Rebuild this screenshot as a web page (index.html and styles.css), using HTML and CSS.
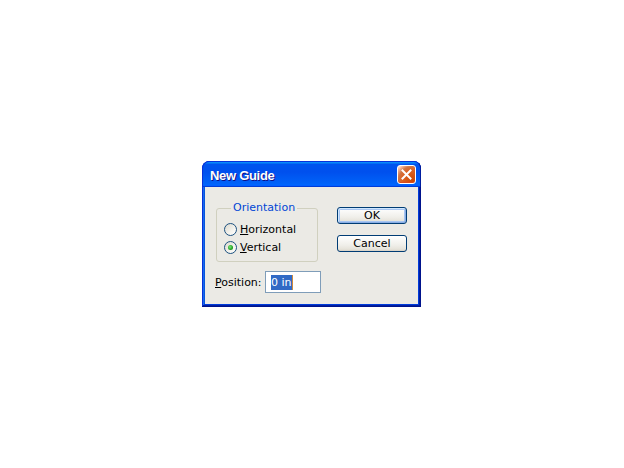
FILE: index.html
```html
<!DOCTYPE html>
<html lang="en">
<head>
<meta charset="utf-8">
<title>New Guide</title>
<link rel="stylesheet" href="styles.css">
</head>
<body>
<div class="window">
  <div class="titlebar">
    <span class="title">New Guide</span>
    <button class="close" aria-label="Close">
      <svg width="17" height="17" viewBox="0 0 17 17"><path d="M4.5 4.5 L12.5 12.5 M12.5 4.5 L4.5 12.5" stroke="#fff" stroke-width="2" stroke-linecap="square" fill="none"/></svg>
    </button>
  </div>
  <div class="body">
    <div class="top">
      <fieldset class="group">
        <legend>Orientation</legend>
        <label class="radio"><span class="circle"></span><span><u>H</u>orizontal</span></label>
        <label class="radio"><span class="circle checked"></span><span><u>V</u>ertical</span></label>
      </fieldset>
      <div class="buttons">
        <button class="btn default">OK</button>
        <button class="btn">Cancel</button>
      </div>
    </div>
    <div class="pos">
      <span class="label"><u>P</u>osition:</span>
      <div class="field"><span class="sel">0 in</span><span class="caret"></span></div>
    </div>
  </div>
</div>
</body>
</html>
```

FILE: styles.css
```css
html, body {
  margin: 0;
  background: #ffffff;
}
body {
  padding: 161px 0 0 202px;
  font-family: "DejaVu Sans", "Liberation Sans", sans-serif;
  font-size: 11px;
  color: #000;
}
.window {
  width: 219px;
  box-sizing: border-box;
  background: #ebeae5;
  border-radius: 8px 8px 0 0;
  padding: 0 3px 3px 3px;
  box-shadow:
    inset -1px -1px #00138c,
    inset 1px 1px #0831d9,
    inset -2px -2px #001ea0,
    inset 2px 2px #166aee,
    inset -3px -3px #003bda,
    inset 3px 3px #0855dd;
}
.titlebar {
  margin: 0 -3px;
  height: 26px;
  box-sizing: border-box;
  border-radius: 7px 7px 0 0;
  border-top: 1px solid #0831d9;
  border-left: 1px solid #0831d9;
  border-right: 1px solid #001ea0;
  background: linear-gradient(180deg, #0997ff, #0053ee 10%, #0050ee 40%, #0062f8 85%, #0066ff 92%, #005bff 95%, #003dd7 97%, #003dd7);
  display: flex;
  align-items: center;
  justify-content: space-between;
  padding: 0 4px 0 7px;
}
.title {
  font-family: "Liberation Sans", Arial, sans-serif;
  font-weight: bold;
  font-size: 13px;
  letter-spacing: -0.3px;
  color: #fff;
  text-shadow: 1px 1px #0f1089;
  margin-top: 1px;
}
.close {
  width: 19px;
  height: 19px;
  padding: 0;
  margin: 0;
  border: 1px solid #fff;
  border-radius: 3px;
  box-sizing: border-box;
  display: flex;
  align-items: center;
  justify-content: center;
  background: radial-gradient(circle at 90% 90%, #cc4600 0%, #dc6527 55%, #cd7546 70%, #ffccb2 90%, #fff 100%);
  box-shadow: inset 0 -1px 1px #da4b1e;
}
.close svg {
  display: block;
}
.body {
  padding: 14px 11px 11px 11px;
}
.top {
  display: flex;
  align-items: flex-start;
  justify-content: space-between;
}
.group {
  margin: 0;
  width: 102px;
  box-sizing: border-box;
  border: 1px solid #d0d0bf;
  border-radius: 3px;
  padding: 5px 7px 5px 7px;
  min-inline-size: 0;
}
.group legend {
  color: #0046d5;
  padding: 0 2px;
  margin-left: 7px;
  line-height: 14px;
}
.radio {
  display: flex;
  align-items: center;
  gap: 3px;
  height: 18px;
  white-space: nowrap;
}
.circle {
  width: 13px;
  height: 13px;
  box-sizing: border-box;
  border-radius: 50%;
  border: 1px solid #1c5180;
  background: linear-gradient(135deg, #dcd9ce, #f4f3ee 60%, #fff);
  display: flex;
  align-items: center;
  justify-content: center;
  flex: none;
}
.circle.checked::after {
  content: "";
  width: 5px;
  height: 5px;
  border-radius: 50%;
  background: radial-gradient(circle at 40% 40%, #7be87a, #21a121 60%, #0a7a0a);
}
u {
  text-decoration: underline;
  text-underline-offset: 1px;
}
.buttons {
  margin-top: 6px;
  display: flex;
  flex-direction: column;
  gap: 11px;
}
.btn {
  width: 70px;
  height: 17px;
  box-sizing: border-box;
  padding: 0;
  margin: 0;
  font-family: inherit;
  font-size: 11px;
  color: #000;
  border: 1px solid #003c74;
  border-radius: 3px;
  background: linear-gradient(180deg, #fff, #f0efea 60%, #e6e3da 88%, #d6d0c5);
  line-height: 15px;
}
.btn.default {
  box-shadow: inset 1px 1px #cee7ff, inset -1px -1px #89ade4, inset 0 0 0 2px #a8c6f2;
}
.pos {
  margin-top: 9px;
  display: flex;
  align-items: center;
}
.label {
  width: 49px;
  margin-left: -1px;
  margin-right: 1px;
}
.field {
  width: 56px;
  height: 22px;
  box-sizing: border-box;
  border: 1px solid #7f9db9;
  background: #fff;
  padding-left: 5px;
  display: flex;
  align-items: center;
}
.sel {
  background: #316ac5;
  color: #fff;
  line-height: 15px;
  padding: 0;
}
.caret {
  width: 1px;
  height: 15px;
  background: #d08a3a;
}
```
